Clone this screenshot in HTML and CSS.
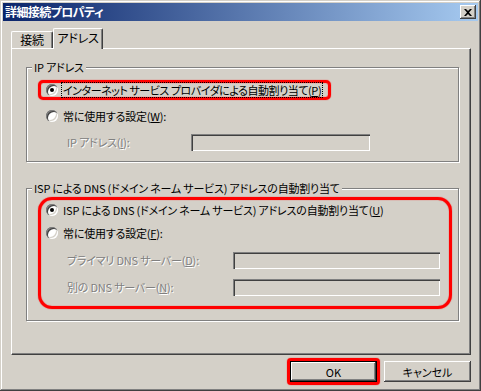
FILE: index.html
```html
<!DOCTYPE html>
<html lang="ja">
<head>
    <meta charset="UTF-8">
    <title>詳細接続プロパティ</title>
    <link rel="stylesheet" href="styles.css">
</head>
<body>

<div class="window">

    <!-- タイトルバー -->
    <div class="titlebar">
        <span class="title">詳細接続プロパティ</span>
        <span class="close">
            <svg width="8" height="7" viewBox="0 0 8 7">
                <path d="M0 0h2l2 2 2-2h2L5 3.5 8 7H6L4 5 2 7H0l3-3.5z" fill="#000"/>
            </svg>
        </span>
    </div>

    <div class="content">

        <!-- タブ -->
        <div class="tabs">
            <div class="tab">接続</div>
            <div class="tab active">アドレス</div>
        </div>

        <div class="panel">

            <!-- IP アドレス -->
            <div class="group group-ip">
                <div class="group-title">IP アドレス</div>

                <div class="mark mark-row">
                    <div class="row">
                        <span class="radio checked"></span>
                        <span class="caption focus">インターネット サービス プロバイダによる自動割り当て(<u>P</u>)</span>
                    </div>
                </div>

                <div class="row row-plain">
                    <span class="radio"></span>
                    <span class="caption">常に使用する設定(<u>W</u>):</span>
                </div>

                <div class="row row-field row-ip">
                    <span class="label disabled">IP アドレス(<u>I</u>):</span>
                    <span class="input input-ip"></span>
                </div>
            </div>

            <!-- DNS -->
            <div class="group group-dns">
                <div class="group-title">ISP による DNS (ドメイン ネーム サービス) アドレスの自動割り当て</div>

                <div class="mark mark-box">
                    <div class="row">
                        <span class="radio checked"></span>
                        <span class="caption">ISP による DNS (ドメイン ネーム サービス) アドレスの自動割り当て(<u>U</u>)</span>
                    </div>
                    <div class="row row-second">
                        <span class="radio"></span>
                        <span class="caption">常に使用する設定(<u>F</u>):</span>
                    </div>
                    <div class="row row-field row-dns">
                        <span class="label disabled">プライマリ DNS サーバー(<u>D</u>):</span>
                        <span class="input input-dns"></span>
                    </div>
                    <div class="row row-field row-dns">
                        <span class="label disabled">別の DNS サーバー(<u>N</u>):</span>
                        <span class="input input-dns"></span>
                    </div>
                </div>
            </div>

        </div>

        <!-- ボタン -->
        <div class="buttons">
            <div class="mark mark-ok">
                <button class="btn default">OK</button>
            </div>
            <button class="btn">キャンセル</button>
        </div>

    </div>
</div>

</body>
</html>
```

FILE: styles.css
```css
/* 基本 */
body {
    margin: 0;
    background: #d4d0c8;
    font-family: "Noto Sans CJK JP", sans-serif;
    font-size: 11px;
    line-height: 14px;
    letter-spacing: -0.2px;
    font-feature-settings: "palt";
    color: #000;
}

/* ウィンドウ枠 */
.window {
    width: 481px;
    height: 391px;
    box-sizing: border-box;
    padding: 3px;
    box-shadow: inset -1px -1px #404040, inset 1px 1px #d4d0c8,
                inset -2px -2px #808080, inset 2px 2px #fff;
}

.titlebar {
    height: 18px;
    display: flex;
    align-items: center;
    justify-content: space-between;
    padding: 0 2px;
    background: linear-gradient(to right, #0a246a, #a6caf0);
    color: #fff;
    font-size: 12px;
    font-weight: bold;
    letter-spacing: -0.6px;
}

.close {
    width: 16px;
    height: 14px;
    display: flex;
    align-items: center;
    justify-content: center;
    background: #d4d0c8;
    box-shadow: inset -1px -1px #404040, inset 1px 1px #fff,
                inset -2px -2px #808080;
}

.content {
    padding: 7px 7px 0 8px;
}

/* タブ */
.tabs {
    display: flex;
    align-items: flex-end;
    height: 20px;
}

.tab {
    height: 17px;
    box-sizing: border-box;
    width: 42px;
    text-align: center;
    line-height: 15px;
    font-size: 12px;
    border-top: 1px solid #fff;
    border-left: 1px solid #fff;
    border-right: 1px solid #404040;
    border-radius: 2px 2px 0 0;
    box-shadow: inset -1px 0 #808080;
}

.tab.active {
    width: 50px;
    height: 21px;
    line-height: 17px;
    margin-bottom: -1px;
    background: #d4d0c8;
    position: relative;
    z-index: 1;
}

.panel {
    height: 307px;
    box-sizing: border-box;
    border-top: 1px solid #fff;
    border-left: 1px solid #fff;
    border-right: 1px solid #404040;
    border-bottom: 1px solid #404040;
    box-shadow: inset -1px -1px #808080;
    padding: 18px 11px 0 14px;
}

/* グループボックス */
.group {
    border: 1px solid #808080;
    box-shadow: 1px 1px #fff, inset 1px 1px #fff;
    padding: 0 6px 9px 11px;
}

.group-dns {
    margin-top: 26px;
    padding-bottom: 11px;
}

.group-title {
    display: table;
    margin: -8px 0 0 -6px;
    padding: 0 2px;
    background: #d4d0c8;
}

.row {
    height: 20px;
    display: flex;
    align-items: center;
}

.row-plain {
    margin-top: 6px;
    padding-left: 8px;
}

.row-ip {
    margin-top: 6px;
    padding-left: 29px;
}

.row-second {
    margin-top: 3px;
}

.row-dns {
    margin-top: 7px;
    padding-left: 21px;
}

/* ラジオボタン */
.radio {
    width: 12px;
    height: 12px;
    flex: none;
    border-radius: 50%;
    background: #fff;
    box-shadow: inset 1px 1px #808080, inset 2px 2px #404040,
                inset -1px -1px #fff, inset -2px -2px #d4d0c8;
    display: flex;
    align-items: center;
    justify-content: center;
}

.checked::after {
    content: "";
    width: 4px;
    height: 4px;
    border-radius: 50%;
    background: #000;
}

.caption {
    margin-left: 3px;
    padding: 0 2px;
    white-space: nowrap;
}

.focus {
    padding: 0 1px;
    border: 1px dotted #000;
    letter-spacing: -0.45px;
}

.label {
    flex: none;
    white-space: nowrap;
}

.row-ip .label {
    width: 124px;
}

.row-dns .label {
    width: 166px;
}

.disabled {
    color: #808080;
    text-shadow: 1px 1px 0 #fff;
}

.input {
    height: 17px;
    box-sizing: border-box;
    background: #d4d0c8;
    box-shadow: inset 1px 1px #808080, inset 2px 2px #404040,
                inset -1px -1px #fff, inset -2px -2px #d4d0c8;
}

.input-ip {
    width: 179px;
}

.input-dns {
    width: 207px;
}

/* 赤い囲み */
.mark {
    border: 3px solid #ff0000;
    box-shadow: 0 0 1px #ff0000, inset 0 0 1px #ff0000;
}

.mark-row {
    width: 293px;
    height: 20px;
    box-sizing: border-box;
    margin-top: 6px;
    border-radius: 5px;
    padding-left: 5px;
    display: flex;
    align-items: center;
}

.mark-row .row {
    height: 14px;
}

.mark-box {
    margin-top: 2px;
    border-radius: 14px;
    padding: 0 0 9px 5px;
}

/* ボタン */
.buttons {
    display: flex;
    justify-content: flex-end;
    align-items: flex-start;
    gap: 4px;
    margin-top: 3px;
}

.mark-ok {
    border-radius: 4px;
    display: flex;
}

.btn {
    width: 87px;
    height: 21px;
    margin: 3px 0 0 0;
    padding: 0;
    border: none;
    background: #d4d0c8;
    font: inherit;
    color: #000;
    box-shadow: inset -1px -1px #404040, inset 1px 1px #fff,
                inset -2px -2px #808080;
}

.btn.default {
    margin: 0;
    box-shadow: inset 0 0 0 1px #000, inset -2px -2px #404040,
                inset 2px 2px #fff, inset -3px -3px #808080;
}
```
